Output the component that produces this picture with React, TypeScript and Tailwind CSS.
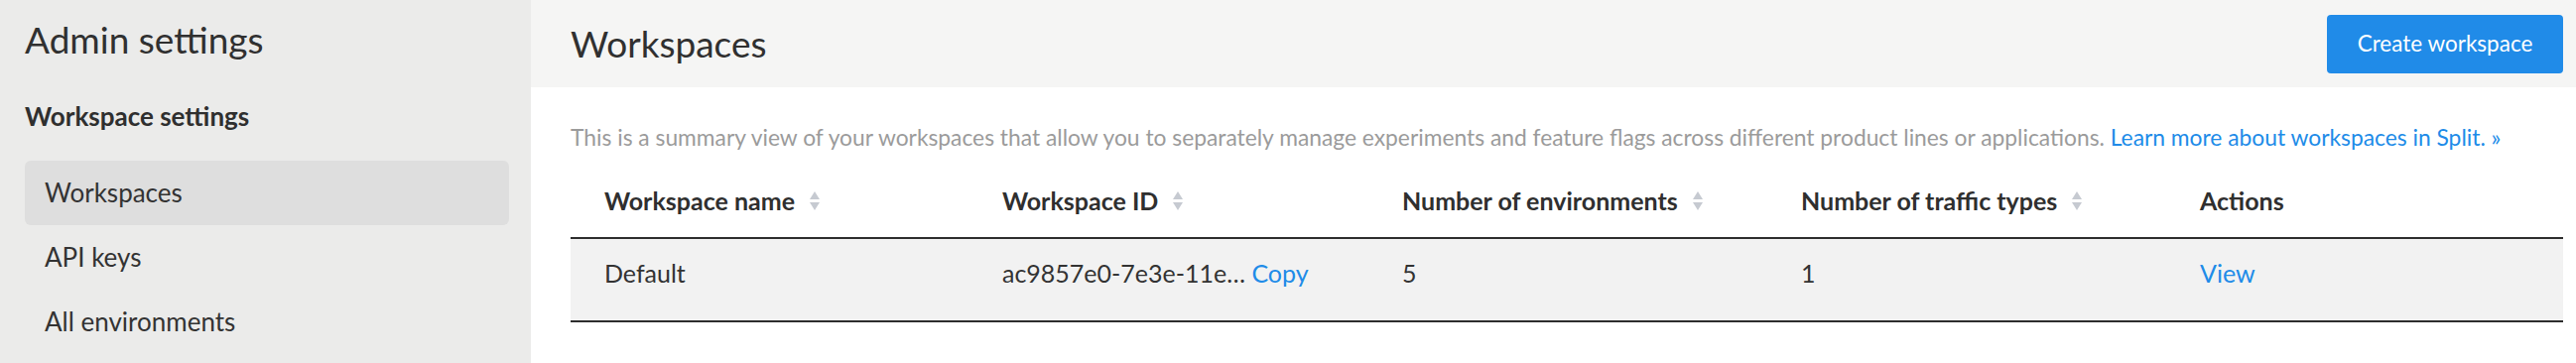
import { ReactNode } from "react";

const navItems = [
    { label: "Workspaces", active: true },
    { label: "API keys", active: false },
    { label: "All environments", active: false },
];

function SortIcon() {
    return (
        <svg width="12" height="24" viewBox="0 0 12 24" className="ml-[14px] shrink-0">
            <path d="M6 2 L11 10 L1 10 Z" fill="#c6cad1" />
            <path d="M1 13 L11 13 L6 21 Z" fill="#c6cad1" />
        </svg>
    );
}

function HeaderCell({ children, sortable = true }: { children: ReactNode; sortable?: boolean }) {
    return (
        <div className="flex items-center font-bold text-[25px] text-[#2f2f2f]">
            <span>{children}</span>
            {sortable && <SortIcon />}
        </div>
    );
}

export default function App() {
    return (
        <div
            className="flex w-[2596px] h-[366px] overflow-hidden bg-white text-[#333]"
            style={{ fontFamily: "Lato, 'Noto Sans', sans-serif" }}
        >
            {/* sidebar */}
            <aside className="w-[535px] shrink-0 bg-[#ebebea] pl-[25px] pr-[22px] pt-[16px]">
                <h1 className="text-[37px] leading-[48px] font-normal text-[#303030]">Admin settings</h1>
                <h2 className="mt-[37px] text-[26px] leading-[32px] font-bold text-[#2f2f2f]">Workspace settings</h2>
                <nav className="mt-[29px] flex flex-col">
                    {navItems.map(item => (
                        <div
                            key={item.label}
                            className={`h-[65px] flex items-center px-[20px] rounded-[6px] text-[26px] text-[#333] ${item.active ? "bg-[#dedede]" : ""}`}
                        >
                            {item.label}
                        </div>
                    ))}
                </nav>
            </aside>

            {/* main */}
            <main className="flex-1 flex flex-col">
                <div className="h-[88px] bg-[#f5f5f4] flex items-center justify-between pl-[40px] pr-[13px]">
                    <h1 className="text-[37px] font-normal text-[#303030]">Workspaces</h1>
                    <button className="w-[238px] h-[59px] rounded-[4px] bg-[#208be8] text-white text-[22.5px]">
                        Create workspace
                    </button>
                </div>

                <div className="pl-[40px] pr-[13px]">
                    <p className="mt-[36px] text-[22.8px] leading-[28px] text-[#9b9b9b] whitespace-nowrap">
                        This is a summary view of your workspaces that allow you to separately manage experiments and feature flags across different product lines or applications.{" "}
                        <a className="text-[#208be8]">Learn more about workspaces in Split. »</a>
                    </p>

                    <div className="mt-[14px]">
                        <div className="h-[75px] grid grid-cols-[401px_403px_402px_402px_1fr] items-center pl-[34px] border-b-[2px] border-[#2d2d2d]">
                            <HeaderCell>Workspace name</HeaderCell>
                            <HeaderCell>Workspace ID</HeaderCell>
                            <HeaderCell>Number of environments</HeaderCell>
                            <HeaderCell>Number of traffic types</HeaderCell>
                            <HeaderCell sortable={false}>Actions</HeaderCell>
                        </div>
                        <div className="h-[84px] grid grid-cols-[401px_403px_402px_402px_1fr] items-center pl-[34px] pb-[12px] bg-[#f2f2f2] border-b-[2px] border-[#2d2d2d] text-[25px] text-[#333]">
                            <span>Default</span>
                            <span>
                                ac9857e0-7e3e-11e… <a className="text-[#208be8]">Copy</a>
                            </span>
                            <span>5</span>
                            <span>1</span>
                            <a className="text-[#208be8]">View</a>
                        </div>
                    </div>
                </div>
            </main>
        </div>
    );
}
